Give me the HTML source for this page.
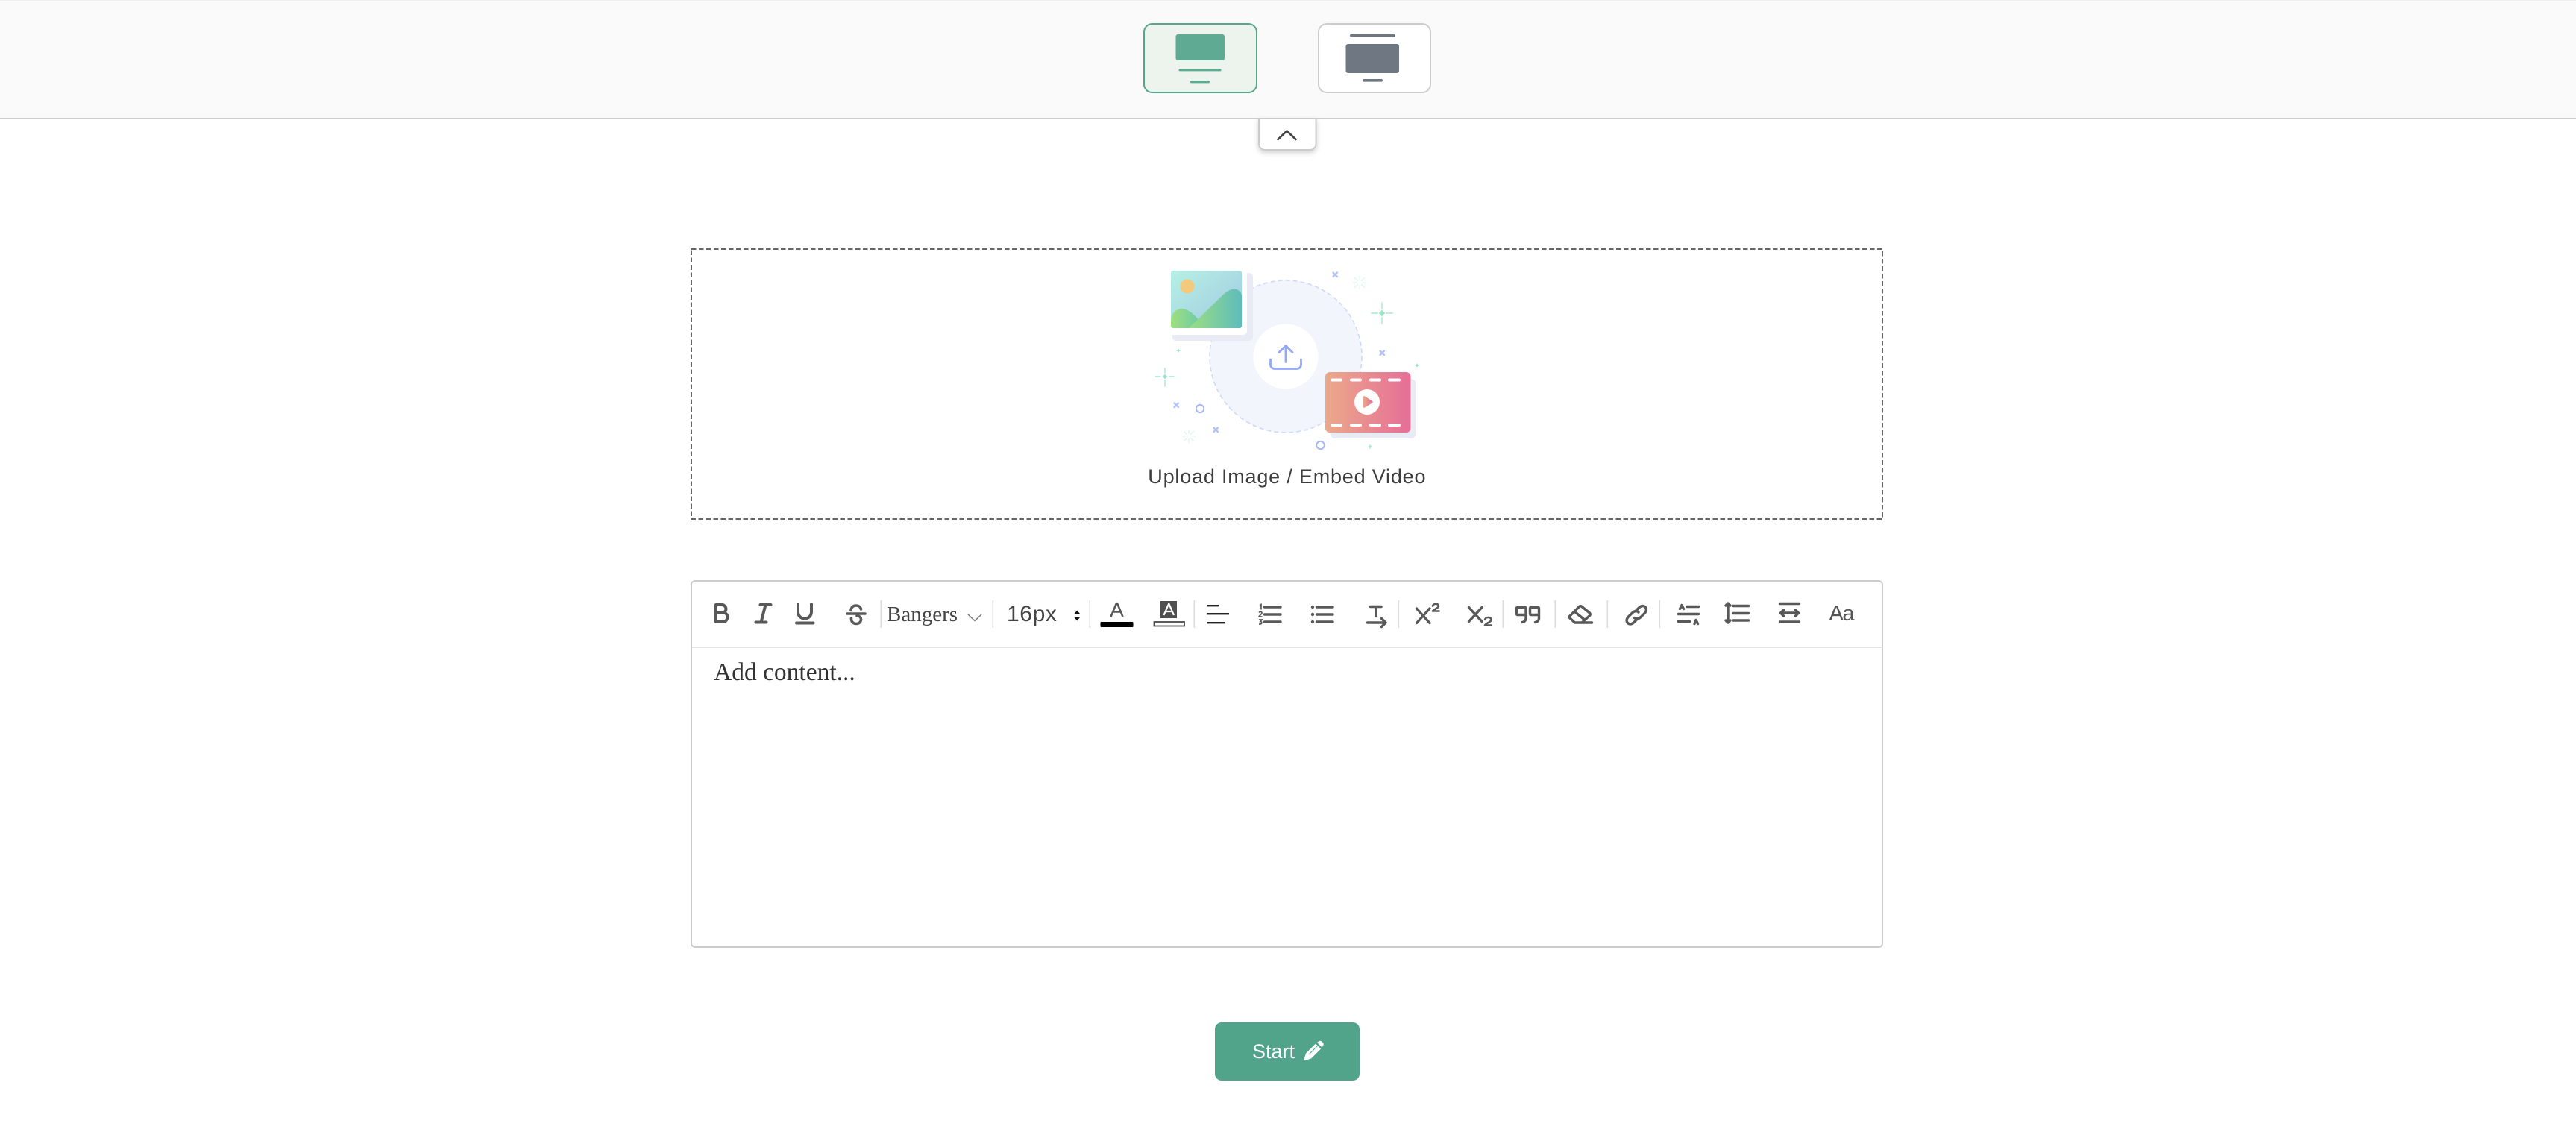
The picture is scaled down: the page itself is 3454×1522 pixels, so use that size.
<!DOCTYPE html>
<html><head><meta charset="utf-8"><title>Editor</title>
<style>
html,body{margin:0;padding:0;background:#fff;width:3454px;height:1522px;overflow:hidden}
svg{display:block;position:absolute;left:0;top:0}
.ic{fill:none;stroke:#595959;stroke-width:3.4;stroke-linecap:round;stroke-linejoin:round}
</style></head><body>
<svg width="3454" height="1522" viewBox="0 0 3454 1522" xmlns="http://www.w3.org/2000/svg">
<defs>
<linearGradient id="sky" x1="0" y1="0" x2="1" y2="1"><stop offset="0" stop-color="#b6f0e4"/><stop offset="1" stop-color="#9fc9e2"/></linearGradient>
<linearGradient id="hill1" x1="0" y1="0" x2="1" y2="0"><stop offset="0" stop-color="#a0e07e"/><stop offset="1" stop-color="#6fcba6"/></linearGradient>
<linearGradient id="hill2" x1="0" y1="0" x2="1" y2="0"><stop offset="0" stop-color="#9bdf80"/><stop offset="1" stop-color="#5ebcbc"/></linearGradient>
<linearGradient id="vid" x1="0" y1="0" x2="1" y2="0"><stop offset="0" stop-color="#eba98a"/><stop offset="1" stop-color="#e66e97"/></linearGradient>
<filter id="tabsh" x="-30%" y="-30%" width="160%" height="170%"><feDropShadow dx="0" dy="3" stdDeviation="3.5" flood-color="#000" flood-opacity=".18"/></filter>
</defs>

<!-- top bar -->
<rect x="0" y="0" width="3454" height="159" fill="#fafafa"/>
<rect x="0" y="0" width="3454" height="1" fill="#eeeeee"/>

<!-- collapse tab -->
<path d="M1688 159V193a8 8 0 0 0 8 8H1756.500a8 8 0 0 0 8-8V159Z" fill="#fff" stroke="#cccccc" stroke-width="2" filter="url(#tabsh)"/>
<rect x="0" y="158" width="3454" height="2" fill="#cccccc"/>
<path d="M1713.500 187L1725.500 175.500L1737.500 187" fill="none" stroke="#444" stroke-width="2.600" stroke-linecap="round" stroke-linejoin="round"/>

<!-- layout 1 -->
<rect x="1534" y="32" width="151" height="92" rx="11" fill="#edf3ed" stroke="#55a68c" stroke-width="2"/>
<rect x="1576.500" y="46" width="65.500" height="35" rx="3" fill="#5eaa93"/>
<rect x="1580.500" y="92" width="57" height="3.400" rx="1.700" fill="#5eaa93"/>
<rect x="1596" y="108" width="26" height="3.400" rx="1.700" fill="#5eaa93"/>

<!-- layout 2 -->
<rect x="1768" y="32" width="150" height="92" rx="11" fill="#fff" stroke="#cccccc" stroke-width="2"/>
<rect x="1810" y="46" width="61" height="3.600" rx="1.800" fill="#6f7782"/>
<rect x="1804.500" y="59" width="71.500" height="39" rx="3" fill="#6f7782"/>
<rect x="1827" y="106" width="27" height="3.600" rx="1.800" fill="#6f7782"/>

<!-- upload box -->
<rect x="927" y="334" width="1597" height="362" fill="#fff" stroke="#666" stroke-width="2" stroke-dasharray="6.500 3.500"/>

<!-- illustration -->
<circle cx="1724" cy="478" r="102" fill="#f2f5fb" stroke="#cddbf8" stroke-width="1.600" stroke-dasharray="6 4"/>
<circle cx="1724" cy="478" r="43.500" fill="#fff"/>
<g fill="none" stroke="#94a8f6" stroke-width="2.800" stroke-linecap="round" stroke-linejoin="round">
<path d="M1703.500 482V489a5.500 5.500 0 0 0 5.500 5.500H1739a5.500 5.500 0 0 0 5.500-5.500V482"/>
<path d="M1724 485.500V464M1715 472.500L1724 463.500L1733 472.500"/>
</g>
<rect x="1572" y="366" width="108" height="91" rx="5" fill="#e8ebf4"/>
<rect x="1566" y="360" width="106" height="89" rx="5" fill="#fff"/>
<rect x="1570" y="363" width="95" height="77" rx="3" fill="url(#sky)"/>
<circle cx="1592" cy="384" r="9.500" fill="#f3ca7d"/>
<path d="M1570 437V430C1570 420 1578 414 1584 414C1592 414 1600 420 1607 429L1596 440H1573a3 3 0 0 1-3-3Z" fill="url(#hill1)"/>
<path d="M1594 440L1637 398C1645 390 1651 387.500 1655 387.500C1660 387.500 1665 392 1665 397V437a3 3 0 0 1-3 3Z" fill="url(#hill2)"/>

<rect x="1784" y="508" width="114" height="80" rx="6" fill="#e8ebf4"/>
<rect x="1777" y="499" width="114.500" height="81" rx="6" fill="url(#vid)"/>
<g fill="#fff">
<rect x="1784" y="507.500" width="16" height="4" rx="2"/><rect x="1810" y="507.500" width="16" height="4" rx="2"/><rect x="1836" y="507.500" width="16" height="4" rx="2"/><rect x="1861" y="507.500" width="17" height="4" rx="2"/>
<rect x="1784" y="568" width="16" height="4" rx="2"/><rect x="1810" y="568" width="16" height="4" rx="2"/><rect x="1836" y="568" width="16" height="4" rx="2"/><rect x="1861" y="568" width="17" height="4" rx="2"/>
<circle cx="1833" cy="539" r="17"/>
</g>
<path d="M1827.500 532.500a1.500 1.500 0 0 1 2.300-1.200L1840 537.700a1.500 1.500 0 0 1 0 2.500L1829.800 546.600a1.500 1.500 0 0 1-2.300-1.200Z" fill="url(#vid)"/>

<!-- sparkles -->
<g fill="none" stroke="#b4c2fa" stroke-width="2.400" stroke-linecap="round">
<path d="M1787.500 365.500l5.500 5.500M1793 365.500l-5.500 5.500"/>
<path d="M1850.500 470.500l5.500 5.500M1856 470.500l-5.500 5.500"/>
<path d="M1574.500 540.500l5.500 5.500M1580 540.500l-5.500 5.500"/>
<path d="M1627.500 573.500l5.500 5.500M1633 573.500l-5.500 5.500"/>
</g>
<circle cx="1609" cy="548" r="5.200" fill="none" stroke="#a3b4f7" stroke-width="1.800"/>
<circle cx="1770.500" cy="597" r="5.200" fill="none" stroke="#a3b4f7" stroke-width="1.800"/>
<g fill="none" stroke="#a6e8d0" stroke-width="1.400" stroke-linecap="round">
<path d="M1853 406V414M1853 426V434M1839 420H1847M1859 420H1867"/>
<path d="M1562 494V500M1562 510V518M1549 505H1556M1568 505H1574"/>
</g>
<g fill="#9be5c9">
<path d="M1853 415.500L1855 418L1857.500 420L1855 422L1853 424.500L1851 422L1848.500 420L1851 418Z"/>
<path d="M1562 501.500L1563.500 503.500L1565.500 505L1563.500 506.500L1562 508.500L1560.500 506.500L1558.500 505L1560.500 503.500Z"/>
<path d="M1580 467L1581 469L1583 470L1581 471L1580 473L1579 471L1577 470L1579 469Z"/>
<path d="M1900 487L1901 489L1903 490L1901 491L1900 493L1899 491L1897 490L1899 489Z"/>
<path d="M1837 596L1838 598L1840 599L1838 600L1837 602L1836 600L1834 599L1836 598Z"/>
</g>
<g fill="none" stroke="#d9f5ea" stroke-width="1.100" stroke-linecap="round">
<path d="M1823 370V375.500M1823 382.500V388M1814 379H1819.500M1826.500 379H1832M1816.500 372.500L1820.500 376.500M1825.500 381.500L1829.500 385.500M1829.500 372.500L1825.500 376.500M1820.500 381.500L1816.500 385.500"/>
<path d="M1594 576V581.500M1594 588.500V594M1585 585H1590.500M1597.500 585H1603M1587.500 578.500L1591.500 582.500M1596.500 587.500L1600.500 591.500M1600.500 578.500L1596.500 582.500M1591.500 587.500L1587.500 591.500"/>
</g>

<text x="1725.800" y="648" text-anchor="middle" font-family="'Liberation Sans',sans-serif" font-size="27" letter-spacing="0.800" fill="#3d3d3d">Upload Image / Embed Video</text>

<!-- editor -->
<rect x="927" y="779" width="1597" height="491" rx="5" fill="#fff" stroke="#cccccc" stroke-width="2"/>
<rect x="928" y="867" width="1595" height="2" fill="#e5e5e5"/>

<g fill="#dddddd">
<rect x="1180.500" y="805" width="1.600" height="37"/><rect x="1330.500" y="805" width="1.600" height="37"/><rect x="1460.500" y="805" width="1.600" height="37"/><rect x="1600.500" y="805" width="1.600" height="37"/><rect x="1874.500" y="805" width="1.600" height="37"/><rect x="2014.500" y="805" width="1.600" height="37"/><rect x="2084.500" y="805" width="1.600" height="37"/><rect x="2154.500" y="805" width="1.600" height="37"/><rect x="2224.500" y="805" width="1.600" height="37"/>
</g>

<!-- B I U S -->
<g class="ic" stroke-width="4">
<path d="M960 811V834H969C973 834 975.500 831 975.500 827.500C975.500 824 973 821.500 969 821.500H960M968 821.500C971.500 821.500 973.500 819.500 973.500 816.500C973.500 813.500 971 811 968 811H960" stroke-width="4"/>
<path d="M1019.500 811H1033.500M1026.500 811L1020.500 834.500M1013.500 834.500H1027.500" stroke-width="4"/>
<path d="M1070 810V820.500C1070 826 1074 829.500 1079 829.500C1084 829.500 1088 826 1088 820.500V810M1068 835.500H1090.500" stroke-width="4"/>
<path d="M1136 823H1160M1141 818.500C1141.500 814 1144 812 1148 812C1151.500 812 1154 814 1154.500 817M1141.500 829C1141 833.500 1144 836.500 1148 836.500C1152 836.500 1154.500 834 1154.500 830.500C1154.500 828 1152.500 826 1149 826" stroke-width="3.600"/>
</g>

<text x="1189" y="833" font-family="'Liberation Serif',serif" font-size="29" fill="#444">Bangers</text>
<path d="M1298 824L1307 832.500L1316 824" fill="none" stroke="#777" stroke-width="1.500"/>
<text x="1350" y="833" font-family="'Liberation Sans',sans-serif" font-size="30" letter-spacing="0.600" fill="#444">16px</text>
<path d="M1440.500 823L1444.300 818.500L1448 823ZM1440.500 828L1444.300 832.500L1448 828Z" fill="#111"/>

<!-- font colour -->
<path d="M1489.500 827L1497 809H1498L1505.500 827M1492.500 820.500H1502.500" fill="none" stroke="#595959" stroke-width="2.600" stroke-linejoin="round"/>
<rect x="1475.500" y="834" width="44" height="7" rx="1" fill="#000"/>
<!-- highlight -->
<rect x="1556" y="806" width="22" height="23" fill="#4f4f4f"/>
<path d="M1560.500 825L1567 810H1567.500L1574 825M1563 820H1571.500" fill="none" stroke="#fff" stroke-width="2.200"/>
<rect x="1547.500" y="834" width="40.500" height="5.500" fill="#fff" stroke="#4a4a4a" stroke-width="1.800"/>
<!-- align -->
<g fill="#222">
<rect x="1618" y="811" width="16" height="2.400"/><rect x="1618" y="822" width="30" height="2.400"/><rect x="1618" y="834" width="25" height="2.400"/>
</g>
<!-- ordered list -->
<g transform="translate(15.500 0)">
<g class="ic" stroke-width="2.600">
<path d="M1680 814H1701.500M1680 824H1701.500M1680 834H1701.500"/>
</g>
<g fill="none" stroke="#595959" stroke-width="1.700">
<path d="M1673.500 811.500L1675.500 810.500V817.500"/>
<path d="M1672.500 821.500C1673.500 820 1676.500 820 1676.500 822C1676.500 823.500 1673.500 825 1672.500 827H1677"/>
<path d="M1672.500 831H1676.500L1674.500 833.500C1677 833.500 1677.500 837.500 1672.500 837"/>
</g>
</g>
<!-- bullet list -->
<g transform="translate(19.500 0)">
<g fill="#595959"><circle cx="1740.500" cy="814" r="2.200"/><circle cx="1740.500" cy="824" r="2.200"/><circle cx="1740.500" cy="834" r="2.200"/></g>
<g class="ic" stroke-width="2.600"><path d="M1746 814H1767.500M1746 824H1767.500M1746 834H1767.500"/></g>
</g>
<!-- T arrow -->
<g class="ic" stroke-width="3" transform="translate(24.500 0)">
<path d="M1813 813.500H1827.500M1820.500 813.500V826.500" stroke-width="3.600"/>
<path d="M1809 835H1833.500M1828 829.500L1833.500 835L1828 840.500"/>
</g>
<!-- super / sub -->
<g class="ic" stroke-width="3">
<g transform="translate(29 0)">
<path d="M1870.500 816L1888 835.500M1888 816L1870.500 835.500"/>
<path d="M1892 812.500C1892.500 809.500 1899.500 808.500 1900 812.500C1900.500 815 1893.500 817 1892 819.500H1900.500" stroke-width="2.600"/>
</g>
<g transform="translate(33 0)">
<path d="M1936.500 814.500L1954 833.500M1954 814.500L1936.500 833.500"/>
<path d="M1958 831C1958.500 827.500 1966 826.500 1966.500 831C1967 834 1959.500 835.500 1958 838.500H1966.500" stroke-width="2.600"/>
</g>
</g>
<!-- quote -->
<g class="ic" stroke-width="2.800">
<path d="M2035 814.500H2044.500C2045.500 814.500 2046 815 2046 816V829C2046 832 2044 834 2041 834.500M2035 814.500C2034 814.500 2033.500 815 2033.500 816V823C2033.500 824 2034 824.500 2035 824.500H2045.500"/>
<path d="M2053 814.500H2062C2063 814.500 2063.500 815 2063.500 816V829C2063.500 832 2061.500 834 2058.500 834.500M2053 814.500C2052 814.500 2051.500 815 2051.500 816V823C2051.500 824 2052 824.500 2053 824.500H2063"/>
</g>
<!-- eraser -->
<g class="ic" stroke-width="3">
<path d="M2103.500 827.500L2117.500 813.500C2118.500 812.500 2120 812.500 2121 813.500L2131.500 822C2132.500 823 2132.500 824.500 2131.500 825.500L2121 835H2111.500ZM2111 820L2124.500 831M2121 835H2134.500"/>
</g>
<!-- link -->
<g class="ic" stroke-width="3">
<path d="M2193 819.500L2197.500 815C2200.500 812 2204 812 2206 814C2208 816 2208 819.500 2205 822.500L2200 827.500C2197 830.500 2193.500 830.500 2191.500 828.500"/>
<path d="M2196 829.500L2191 834.500C2188 837.500 2184.500 837.500 2182.500 835.500C2180.500 833.500 2180.500 830 2183.500 827L2188.500 822C2191.500 819 2195 819 2197 821"/>
</g>
<!-- letter spacing icon -->
<g class="ic" stroke-width="2.800">
<path d="M2262 813.500H2277.500M2250.500 823.500H2277.500M2250.500 833.500H2265.500"/>
<path d="M2252.500 816.500L2255 811.500L2257.500 816.500M2272 836.500L2274 831.500L2276.500 836.500"/>
</g>
<!-- line height -->
<g class="ic" stroke-width="2.800">
<path d="M2324 812.500H2344.500M2324 822.500H2344.500M2324 832H2344.500"/>
<path d="M2317 810V834M2314 812L2317 809L2320 812M2314 832L2317 835L2320 832"/>
</g>
<!-- letter width -->
<g class="ic" stroke-width="2.800">
<path d="M2386.500 809.500H2412.500M2386.500 834H2412.500M2388 822H2411M2391.500 818L2387.500 822L2391.500 826M2407.500 818L2411.500 822L2407.500 826"/>
</g>
<text x="2452.500" y="832" font-family="'Liberation Sans',sans-serif" font-size="29" letter-spacing="-1.500" fill="#555">Aa</text>

<text x="957" y="912" font-family="'Liberation Serif',serif" font-size="33.500" fill="#333">Add content...</text>

<!-- start button -->
<rect x="1629" y="1371" width="194" height="78" rx="9" fill="#51a489"/>
<text x="1679" y="1419" font-family="'Liberation Sans',sans-serif" font-size="27" fill="#fff">Start</text>
<g>
<path d="M1748 1422.500L1751 1412.500L1764 1399.500L1771 1406.500L1758 1419.500Z" fill="#fff"/>
<path d="M1755 1414L1766.500 1402.500" stroke="#51a489" stroke-width="1.100" fill="none"/>
<path d="M1766 1398L1768 1396.500C1769.500 1395.500 1771 1395.500 1772.500 1397L1773.500 1398C1775 1399.500 1775 1401 1774 1402.500L1772.500 1404.500Z" fill="#fff"/>
</g>
</svg>
</body></html>
